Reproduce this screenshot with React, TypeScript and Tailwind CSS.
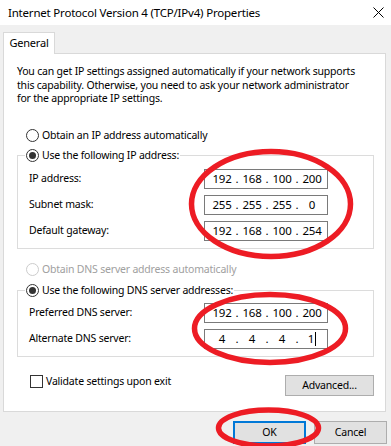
import React from "react";

const Radio = ({ checked = false, disabled = false }: { checked?: boolean; disabled?: boolean }) => (
  <span
    className={`flex h-[13px] w-[13px] shrink-0 items-center justify-center rounded-full border bg-white ${
      disabled ? "border-[#cccccc]" : "border-[#333333]"
    }`}
  >
    {checked && <span className="h-[7px] w-[7px] rounded-full bg-[#333333]" />}
  </span>
);

const IpField = ({ octets, caret = false }: { octets: string[]; caret?: boolean }) => (
  <div className="flex h-[20px] w-[124px] items-center border border-[#7a7a7a] bg-white pl-[5px] text-[11.5px]">
    {octets.map((o, i) => (
      <React.Fragment key={i}>
        <span className="flex w-[24px] items-center justify-center">
          {o}
          {caret && i === 3 && <span className="ml-px inline-block h-[14px] w-px bg-black" />}
        </span>
        {i < 3 && <span className="w-[6px] text-center">.</span>}
      </React.Fragment>
    ))}
  </div>
);

const FieldRow = ({ label, octets, caret }: { label: string; octets: string[]; caret?: boolean }) => (
  <div className="grid grid-cols-[175px_124px] items-center">
    <span>{label}</span>
    <IpField octets={octets} caret={caret} />
  </div>
);

export default function App() {
  return (
    <div className="relative h-[446px] w-[391px] overflow-hidden whitespace-nowrap bg-[#f0f0f0] font-['Noto_Sans',sans-serif] text-[10.5px] tracking-[-0.2px] text-black">
      {/* Title bar */}
      <div className="flex h-[25px] items-center justify-between bg-white pl-[8px] pr-[7px] text-[11.5px]">
        <span>Internet Protocol Version 4 (TCP/IPv4) Properties</span>
        <svg width="11" height="11" viewBox="0 0 11 11">
          <path d="M0.5 0.5 L10.5 10.5 M10.5 0.5 L0.5 10.5" stroke="#000" strokeWidth="1" fill="none" />
        </svg>
      </div>

      {/* Tab strip */}
      <div className="pl-[3px] pt-[7px]">
        <div className="relative z-10 -mb-px flex h-[22px] w-[52px] items-center justify-center border-x border-t border-[#d9d9d9] bg-white pb-px text-[11px]">
          General
        </div>
      </div>

      {/* Tab panel */}
      <div className="ml-[3px] flex h-[359px] w-[383px] flex-col border border-[#d9d9d9] bg-white pl-[13px] pr-[11px] pt-[11px]">
        <p className="leading-[13.5px]">
          You can get IP settings assigned automatically if your network supports
          <br />
          this capability. Otherwise, you need to ask your network administrator
          <br />
          for the appropriate IP settings.
        </p>

        <label className="ml-[9px] mt-[23.5px] flex h-[13px] items-center gap-[3px]">
          <Radio />
          <span>Obtain an IP address automatically</span>
        </label>

        <fieldset className="mt-[7px] border border-[#dcdcdc]">
          <legend className="ml-[7px] flex h-[13px] items-center gap-[3px] px-px">
            <Radio checked />
            <span>Use the following IP address:</span>
          </legend>
          <div className="flex flex-col gap-[6px] pb-[7px] pl-[11px] pt-[7px]">
            <FieldRow label="IP address:" octets={["192", "168", "100", "200"]} />
            <FieldRow label="Subnet mask:" octets={["255", "255", "255", "0"]} />
            <FieldRow label="Default gateway:" octets={["192", "168", "100", "254"]} />
          </div>
        </fieldset>

        <label className="ml-[9px] mt-[14px] flex h-[13px] items-center gap-[3px] text-[#a0a0a0]">
          <Radio disabled />
          <span>Obtain DNS server address automatically</span>
        </label>

        <fieldset className="mt-[8px] border border-[#dcdcdc]">
          <legend className="ml-[7px] flex h-[13px] items-center gap-[3px] px-px">
            <Radio checked />
            <span>Use the following DNS server addresses:</span>
          </legend>
          <div className="flex flex-col gap-[6px] pb-[7px] pl-[11px] pt-[6px]">
            <FieldRow label="Preferred DNS server:" octets={["192", "168", "100", "200"]} />
            <FieldRow label="Alternate DNS server:" octets={["4", "4", "4", "1"]} caret />
          </div>
        </fieldset>

        <div className="mt-[18px] flex items-start justify-between">
          <label className="ml-[13px] flex h-[13px] items-center gap-[3px]">
            <span className="h-[13px] w-[13px] border border-[#333333] bg-white" />
            <span>Validate settings upon exit</span>
          </label>
          <button className="flex h-[21px] w-[89px] items-center justify-center border border-[#adadad] bg-[#e1e1e1]">
            Advanced...
          </button>
        </div>
      </div>

      {/* Dialog buttons */}
      <div className="mt-[9px] flex justify-end gap-[8px] pr-[4px]">
        <button className="flex h-[23px] w-[73px] items-center justify-center border-2 border-[#0078d7] bg-[#e1e1e1]">
          OK
        </button>
        <button className="flex h-[23px] w-[73px] items-center justify-center border border-[#adadad] bg-[#e1e1e1]">
          Cancel
        </button>
      </div>

      {/* Red annotation marks drawn over the dialog */}
      <svg className="pointer-events-none absolute left-0 top-0" width="391" height="446" viewBox="0 0 391 446">
        <g fill="none" stroke="#ed1c24" strokeWidth="5.5">
          <ellipse cx="271" cy="204" rx="79.5" ry="52.5" />
          <ellipse cx="270" cy="328.5" rx="75.5" ry="34" />
          <ellipse cx="268.5" cy="428" rx="50" ry="18" />
        </g>
      </svg>
    </div>
  );
}
